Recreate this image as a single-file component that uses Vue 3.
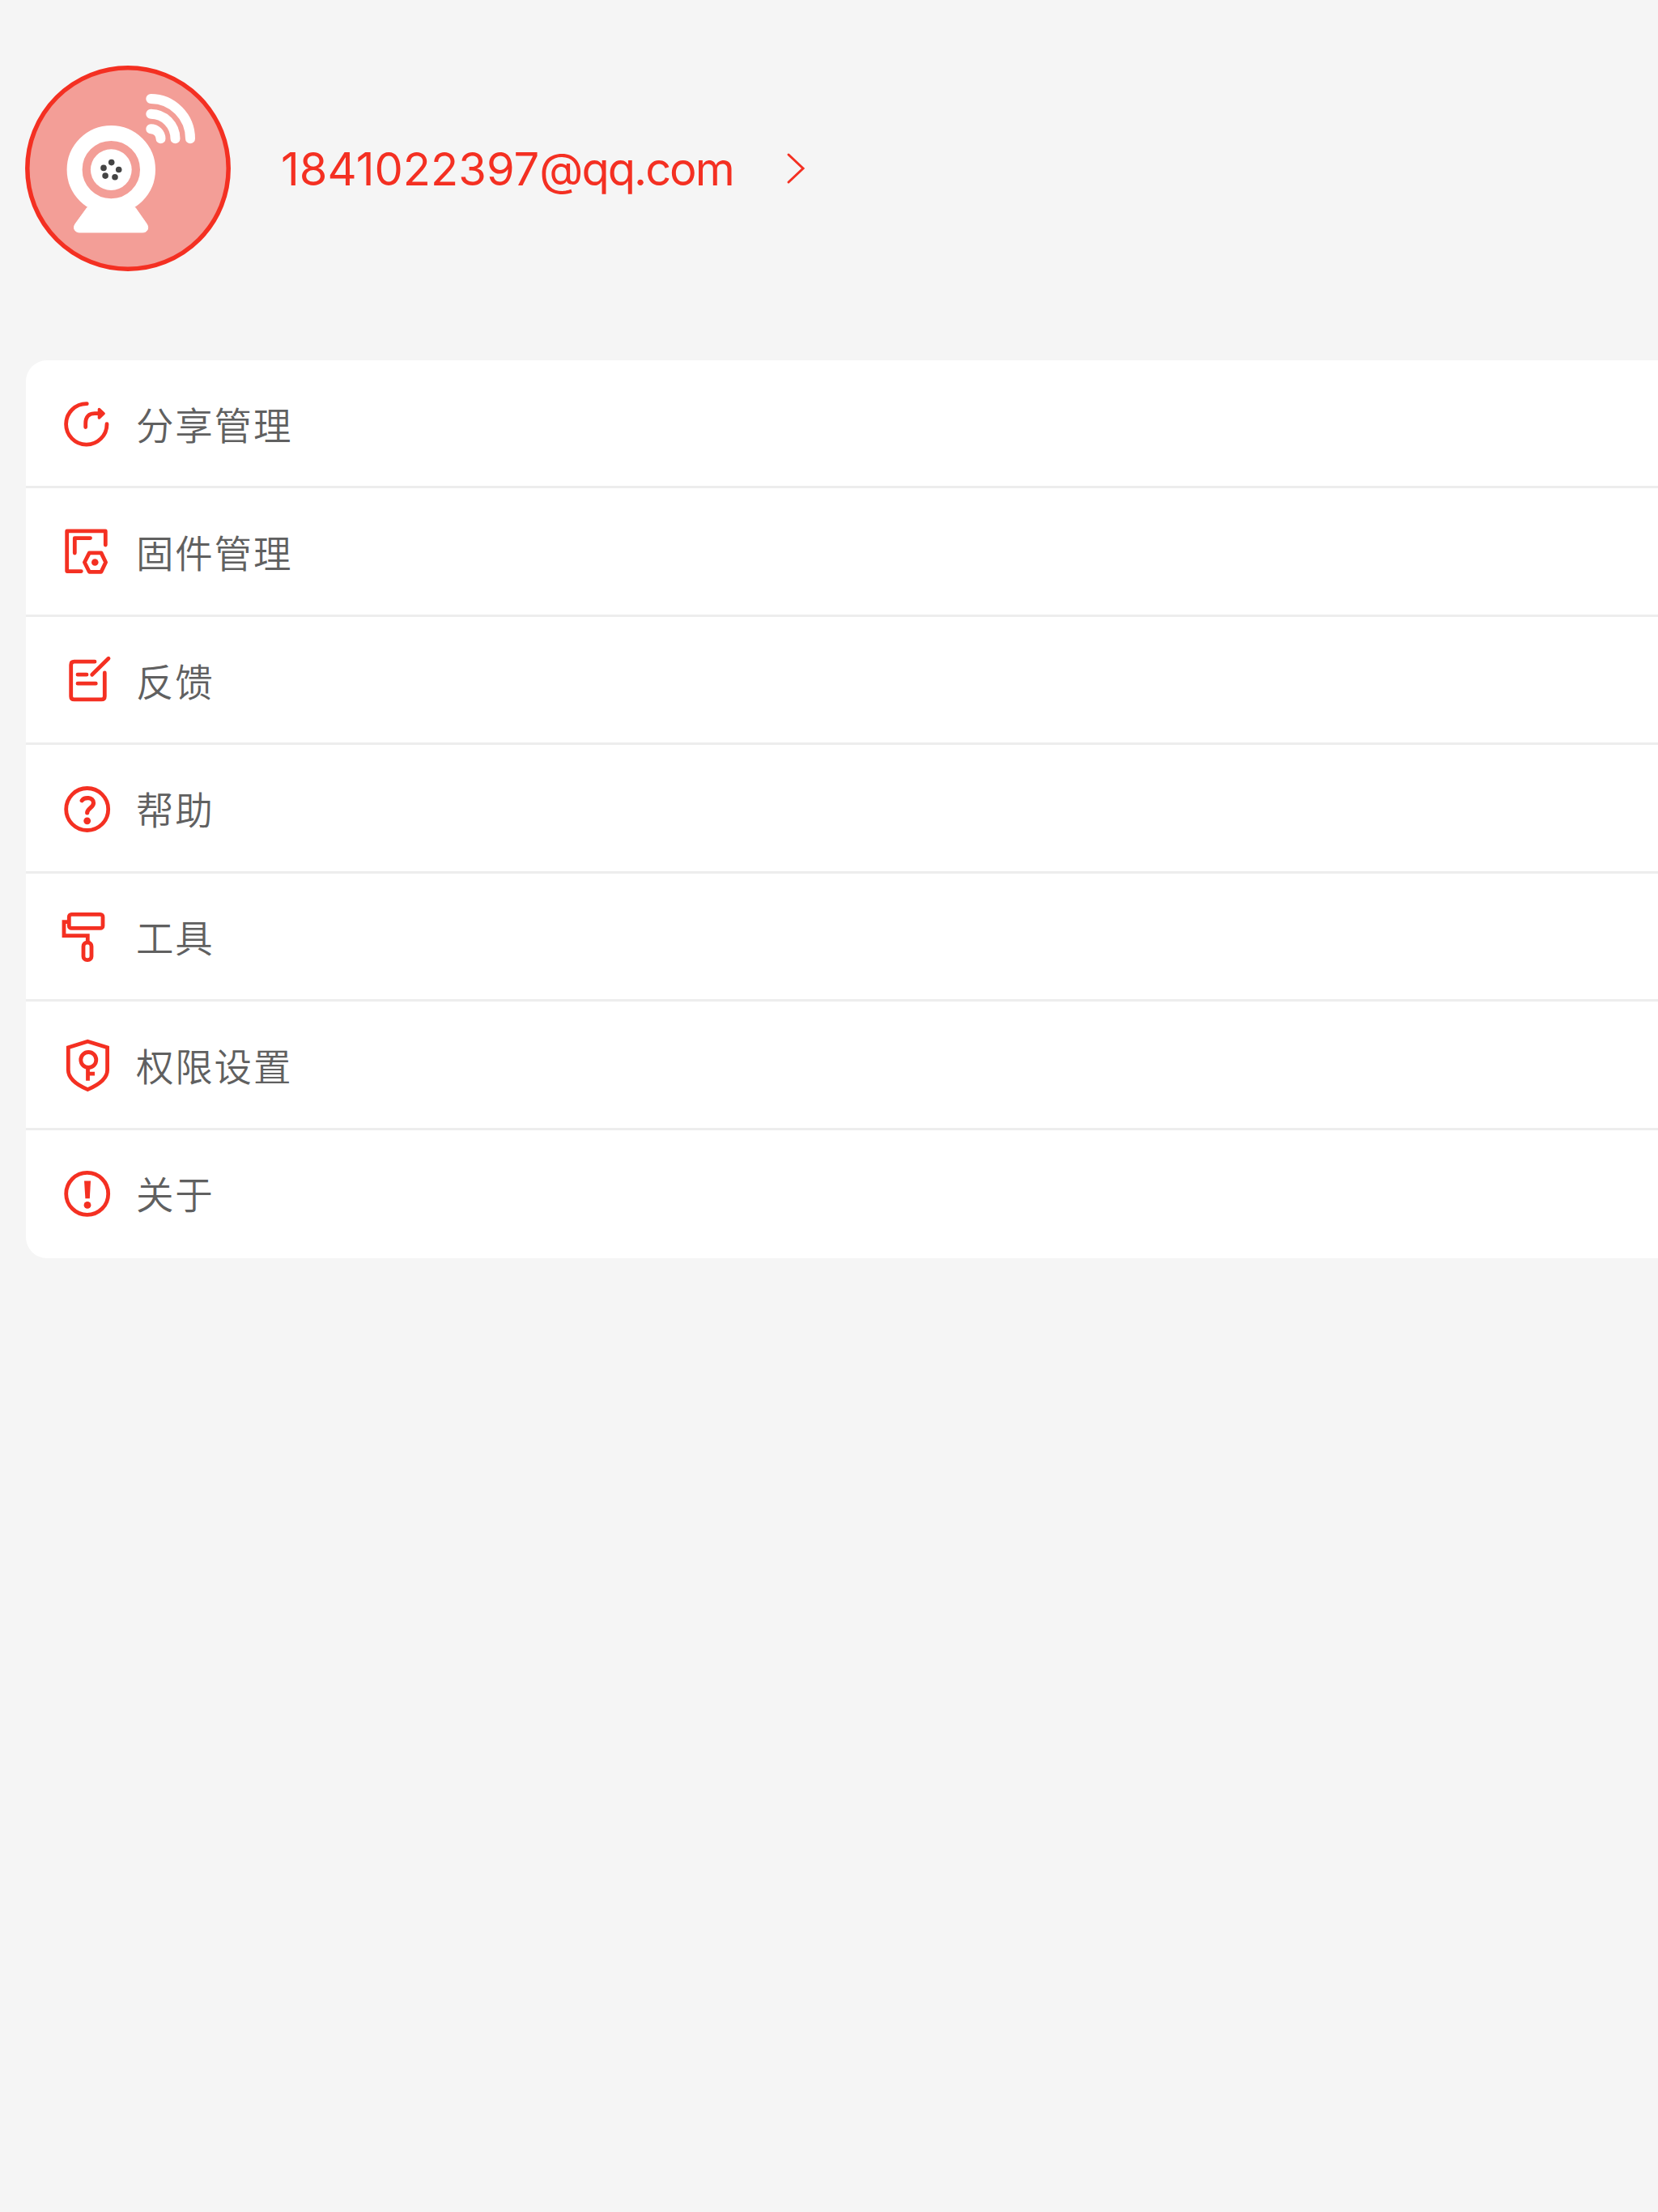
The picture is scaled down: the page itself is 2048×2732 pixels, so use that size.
<template>
  <div class="mine-page">
    <header class="profile">
      <svg class="avatar" viewBox="0 0 254 254">
        <circle class="avatar-bg" cx="127" cy="127" r="124.2" />
        <circle class="cam-ring" cx="106.3" cy="128.6" r="45.2" />
        <circle class="cam-fill" cx="106.3" cy="128.6" r="25.4" />
        <path
          class="cam-fill"
          d="M76.7 175.3L62 195.5C58.5 200.5 61.5 206 67 206H145.5C151 206 153.5 200.5 150.2 195.5L136 175.3C118 178 94 178 76.7 175.3Z"
        />
        <circle v-for="(dot, i) in lensDots" :key="i" class="cam-dot" :cx="dot[0]" :cy="dot[1]" r="3.8" />
        <path class="cam-wave" d="M155.3 41A48.8 49.3 0 0 1 204 90.3" />
        <path class="cam-wave" d="M155.3 59.7A30.2 30.6 0 0 1 185.5 90.3" />
        <path class="cam-wave" d="M155.3 78.2A12.2 12.2 0 0 1 167.5 90.3" />
      </svg>
      <span class="account">{{ account.id }}<span class="account-domain">{{ account.domain }}</span></span>
      <svg class="arrow" viewBox="0 0 24 40">
        <path d="M3 3L21 20L3 37" />
      </svg>
    </header>

    <ul class="menu">
      <li v-for="item in menus" :key="item.name" class="menu-item">
        <svg class="menu-icon" viewBox="0 0 64 64">
          <template v-if="item.name === 'share'">
            <path d="M32.3 7.7A25.2 25.2 0 1 0 57 32.7" />
            <path d="M30.7 36.5V32C30.7 23.500 35 19.7 42 19.7H47" />
            <path class="solid" d="M47.5 14.5L53 19.7L47.5 24.9Z" />
          </template>
          <template v-else-if="item.name === 'firmware'">
            <path d="M55.3 24V6.9H7.7V56.6H25.3" />
            <path d="M17.3 34V15.6H36.5" />
            <path d="M35.3 33.9H50L55.6 45.5L50 57.3H35.3L29.4 45.5Z" />
            <circle class="dot" cx="42.3" cy="45.5" r="4.3" />
          </template>
          <template v-else-if="item.name === 'feedback'">
            <path d="M42 9.2H16.7Q12.7 9.2 12.7 13.2V51.9Q12.7 55.9 16.7 55.9H50.3Q54.3 55.9 54.3 51.9V23" />
            <path d="M38.7 25.2L59 5.2M21 25.2H32M21 36.2H43.3" />
          </template>
          <template v-else-if="item.name === 'help'">
            <circle cx="32.7" cy="33.5" r="26" />
            <path class="mark" d="M26.2 22.7C28.5 18.8 40.5 17.5 40.5 25.7C40.5 31.5 32.7 32.5 32.7 37.8" />
            <circle class="dot" cx="32.7" cy="47.8" r="4.4" />
          </template>
          <template v-else-if="item.name === 'tools'">
            <rect x="10.3" y="5.4" width="41.7" height="17" rx="3" />
            <path class="sharp" d="M10 14.7H4V31.7H33.3V39" />
            <rect x="28" y="40.2" width="10" height="21.5" rx="4.5" />
          </template>
          <template v-else-if="item.name === 'permission'">
            <path class="sharp" d="M33.3 3.2L57.6 10.8V38.5C57.6 47 50 55.5 33.3 62.6C16.6 55.5 9.3 47 9.3 38.5V10.8Z" />
            <circle cx="34.3" cy="26" r="9.5" />
            <path class="sharp" d="M33.5 35.5V51.7M33.5 43.2H42" />
          </template>
          <template v-else>
            <circle cx="32.7" cy="33.4" r="26" />
            <path class="dot" d="M29 17.6H37L35.8 39.3H30.4Z" />
            <circle class="dot" cx="33" cy="47.4" r="4.4" />
          </template>
        </svg>
        <span class="menu-label">{{ item.label }}</span>
      </li>
    </ul>
  </div>
</template>

<script setup>
const account = { id: '1841022397', domain: '@qq.com' }

const lensDots = [
  [106.7, 119.6],
  [97, 126.4],
  [115.7, 128.5],
  [99.1, 136.1],
  [111, 137.8]
]

const menus = [
  { name: 'share', label: '分享管理' },
  { name: 'firmware', label: '固件管理' },
  { name: 'feedback', label: '反馈' },
  { name: 'help', label: '帮助' },
  { name: 'tools', label: '工具' },
  { name: 'permission', label: '权限设置' },
  { name: 'about', label: '关于' }
]
</script>

<style>
body {
  background: #f5f5f5;
}
</style>

<style scoped>
.mine-page {
  box-sizing: border-box;
  min-height: 2732px;
  padding: 80.7px 0 0 31.5px;
  overflow: hidden;
  background: #f5f5f5;
  font-family: Inter, "Noto Sans CJK SC", sans-serif;
}

.profile {
  display: flex;
  align-items: center;
  height: 254px;
}

.avatar {
  flex: none;
  width: 254px;
  height: 254px;
  margin-left: -0.5px;
}

.avatar-bg {
  fill: #f39e97;
  stroke: #f43022;
  stroke-width: 5.5;
}

.cam-ring {
  fill: none;
  stroke: #fff;
  stroke-width: 19;
}

.cam-fill {
  fill: #fff;
}

/* overlaps the ring so no seam shows between them */
path.cam-fill {
  stroke: #fff;
  stroke-width: 1;
}

.cam-dot {
  fill: #444;
}

.cam-wave {
  fill: none;
  stroke: #fff;
  stroke-width: 12;
  stroke-linecap: round;
}

.account {
  margin-left: 62px;
  padding-top: 2px;
  color: #f43022;
  font-size: 56px;
  line-height: 68px;
  letter-spacing: 0.05px;
  white-space: nowrap;
}

.account-domain {
  letter-spacing: -2px;
}

.arrow {
  width: 24px;
  height: 40px;
  margin-left: 65px;
  fill: none;
  stroke: #f43022;
  stroke-width: 3;
  stroke-linecap: round;
}

.menu {
  display: flex;
  flex-direction: column;
  height: 1109px;
  margin: 110.3px 0 0;
  padding: 0;
  list-style: none;
  background: #fff;
  border-radius: 26px 0 0 26px;
}

.menu-item {
  box-sizing: border-box;
  display: flex;
  flex: 1;
  align-items: center;
  padding-left: 43.5px;
  border-bottom: 3px solid #ededed;
}

.menu-item:last-child {
  border-bottom-color: transparent;
}

.menu-icon {
  flex: none;
  width: 64px;
  height: 64px;
  overflow: visible;
  fill: none;
  stroke: #f43022;
  stroke-width: 4.8;
  stroke-linecap: round;
  stroke-linejoin: round;
}

.menu-icon .dot {
  fill: #f43022;
  stroke: none;
}

.menu-icon .solid {
  fill: #f43022;
  stroke-width: 3.6;
}

.menu-icon .mark {
  stroke-width: 5.2;
}

.menu-icon .sharp {
  stroke-linecap: butt;
  stroke-linejoin: miter;
}

.menu-label {
  margin-left: 29px;
  color: #606060;
  font-family: "Noto Sans CJK SC", sans-serif;
  font-size: 46.5px;
  font-weight: 350;
  line-height: 64px;
  letter-spacing: 1.8px;
}
</style>
